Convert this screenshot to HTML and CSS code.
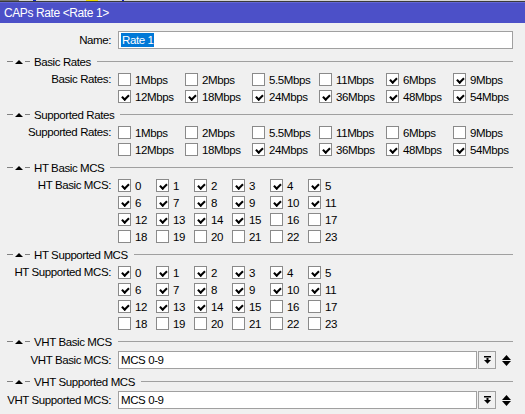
FILE: index.html
```html
<!DOCTYPE html>
<html lang="en">
<head>
    <meta charset="UTF-8">
    <meta name="viewport" content="width=device-width, initial-scale=1.0">
    <title>CAPs Rate &lt;Rate 1&gt;</title>
    <link rel="stylesheet" href="styles.css">
</head>
<body>

<div class="taskbar">
    <span class="tb-dark"></span><span class="tb-gap"></span><span class="tb-blue"></span><span class="tb-gap wide"></span><span class="tb-yellow"></span><span class="tb-gap"></span><span class="tb-blue small"></span>
</div>

<div class="window">
    <div class="titlebar">CAPs Rate &lt;Rate 1&gt;</div>

    <div class="form">
        <div class="field input-row">
            <div class="label">Name:</div>
            <div class="textbox name"><span class="selected">Rate 1</span></div>
        </div>

        <div class="section">
            <span class="dash"></span><span class="tri"></span><span class="dash short"></span>
            <span class="section-title">Basic Rates</span><span class="rule"></span>
        </div>
        <div class="field">
            <div class="label">Basic Rates:</div>
            <div class="checks rates">
                <label class="opt"><span class="cb"></span>1Mbps</label>
                <label class="opt"><span class="cb"></span>2Mbps</label>
                <label class="opt"><span class="cb"></span>5.5Mbps</label>
                <label class="opt"><span class="cb"></span>11Mbps</label>
                <label class="opt"><span class="cb on"></span>6Mbps</label>
                <label class="opt"><span class="cb on"></span>9Mbps</label>
                <label class="opt"><span class="cb on"></span>12Mbps</label>
                <label class="opt"><span class="cb on"></span>18Mbps</label>
                <label class="opt"><span class="cb on"></span>24Mbps</label>
                <label class="opt"><span class="cb on"></span>36Mbps</label>
                <label class="opt"><span class="cb on"></span>48Mbps</label>
                <label class="opt"><span class="cb on"></span>54Mbps</label>
            </div>
        </div>

        <div class="section">
            <span class="dash"></span><span class="tri"></span><span class="dash short"></span>
            <span class="section-title">Supported Rates</span><span class="rule"></span>
        </div>
        <div class="field">
            <div class="label">Supported Rates:</div>
            <div class="checks rates">
                <label class="opt"><span class="cb"></span>1Mbps</label>
                <label class="opt"><span class="cb"></span>2Mbps</label>
                <label class="opt"><span class="cb"></span>5.5Mbps</label>
                <label class="opt"><span class="cb"></span>11Mbps</label>
                <label class="opt"><span class="cb"></span>6Mbps</label>
                <label class="opt"><span class="cb"></span>9Mbps</label>
                <label class="opt"><span class="cb"></span>12Mbps</label>
                <label class="opt"><span class="cb"></span>18Mbps</label>
                <label class="opt"><span class="cb on"></span>24Mbps</label>
                <label class="opt"><span class="cb on"></span>36Mbps</label>
                <label class="opt"><span class="cb on"></span>48Mbps</label>
                <label class="opt"><span class="cb on"></span>54Mbps</label>
            </div>
        </div>

        <div class="section">
            <span class="dash"></span><span class="tri"></span><span class="dash short"></span>
            <span class="section-title">HT Basic MCS</span><span class="rule"></span>
        </div>
        <div class="field">
            <div class="label">HT Basic MCS:</div>
            <div class="checks mcs">
                <label class="opt"><span class="cb on"></span>0</label>
                <label class="opt"><span class="cb on"></span>1</label>
                <label class="opt"><span class="cb on"></span>2</label>
                <label class="opt"><span class="cb on"></span>3</label>
                <label class="opt"><span class="cb on"></span>4</label>
                <label class="opt"><span class="cb on"></span>5</label>
                <label class="opt"><span class="cb on"></span>6</label>
                <label class="opt"><span class="cb on"></span>7</label>
                <label class="opt"><span class="cb on"></span>8</label>
                <label class="opt"><span class="cb on"></span>9</label>
                <label class="opt"><span class="cb on"></span>10</label>
                <label class="opt"><span class="cb on"></span>11</label>
                <label class="opt"><span class="cb on"></span>12</label>
                <label class="opt"><span class="cb on"></span>13</label>
                <label class="opt"><span class="cb on"></span>14</label>
                <label class="opt"><span class="cb on"></span>15</label>
                <label class="opt"><span class="cb"></span>16</label>
                <label class="opt"><span class="cb"></span>17</label>
                <label class="opt"><span class="cb"></span>18</label>
                <label class="opt"><span class="cb"></span>19</label>
                <label class="opt"><span class="cb"></span>20</label>
                <label class="opt"><span class="cb"></span>21</label>
                <label class="opt"><span class="cb"></span>22</label>
                <label class="opt"><span class="cb"></span>23</label>
            </div>
        </div>

        <div class="section">
            <span class="dash"></span><span class="tri"></span><span class="dash short"></span>
            <span class="section-title">HT Supported MCS</span><span class="rule"></span>
        </div>
        <div class="field">
            <div class="label">HT Supported MCS:</div>
            <div class="checks mcs">
                <label class="opt"><span class="cb on"></span>0</label>
                <label class="opt"><span class="cb on"></span>1</label>
                <label class="opt"><span class="cb on"></span>2</label>
                <label class="opt"><span class="cb on"></span>3</label>
                <label class="opt"><span class="cb on"></span>4</label>
                <label class="opt"><span class="cb on"></span>5</label>
                <label class="opt"><span class="cb on"></span>6</label>
                <label class="opt"><span class="cb on"></span>7</label>
                <label class="opt"><span class="cb on"></span>8</label>
                <label class="opt"><span class="cb on"></span>9</label>
                <label class="opt"><span class="cb on"></span>10</label>
                <label class="opt"><span class="cb on"></span>11</label>
                <label class="opt"><span class="cb on"></span>12</label>
                <label class="opt"><span class="cb on"></span>13</label>
                <label class="opt"><span class="cb on"></span>14</label>
                <label class="opt"><span class="cb on"></span>15</label>
                <label class="opt"><span class="cb"></span>16</label>
                <label class="opt"><span class="cb"></span>17</label>
                <label class="opt"><span class="cb"></span>18</label>
                <label class="opt"><span class="cb"></span>19</label>
                <label class="opt"><span class="cb"></span>20</label>
                <label class="opt"><span class="cb"></span>21</label>
                <label class="opt"><span class="cb"></span>22</label>
                <label class="opt"><span class="cb"></span>23</label>
            </div>
        </div>

        <div class="section">
            <span class="dash"></span><span class="tri"></span><span class="dash short"></span>
            <span class="section-title">VHT Basic MCS</span><span class="rule"></span>
        </div>
        <div class="field input-row">
            <div class="label">VHT Basic MCS:</div>
            <div class="textbox select">MCS 0-9</div>
            <div class="drop-btn">
                <svg width="7" height="8" viewBox="0 0 7 8"><rect x="0" y="0" width="7" height="1.5" fill="#000"/><rect x="2.5" y="2" width="2" height="2" fill="#000"/><path d="M0 4 H7 L3.5 7.8 Z" fill="#000"/></svg>
            </div>
            <div class="updown">
                <svg width="9" height="11" viewBox="0 0 9 11"><path d="M0 5 L4.5 0 L9 5 Z" fill="#000"/><path d="M0 6 L9 6 L4.5 11 Z" fill="#000"/></svg>
            </div>
        </div>

        <div class="section">
            <span class="dash"></span><span class="tri"></span><span class="dash short"></span>
            <span class="section-title">VHT Supported MCS</span><span class="rule"></span>
        </div>
        <div class="field input-row">
            <div class="label">VHT Supported MCS:</div>
            <div class="textbox select">MCS 0-9</div>
            <div class="drop-btn">
                <svg width="7" height="8" viewBox="0 0 7 8"><rect x="0" y="0" width="7" height="1.5" fill="#000"/><rect x="2.5" y="2" width="2" height="2" fill="#000"/><path d="M0 4 H7 L3.5 7.8 Z" fill="#000"/></svg>
            </div>
            <div class="updown">
                <svg width="9" height="11" viewBox="0 0 9 11"><path d="M0 5 L4.5 0 L9 5 Z" fill="#000"/><path d="M0 6 L9 6 L4.5 11 Z" fill="#000"/></svg>
            </div>
        </div>
    </div>
</div>

</body>
</html>
```

FILE: styles.css
```css
body {
    margin: 0;
    padding: 0;
    background-color: #f0f0f0;
    font-family: "Liberation Sans", Arial, sans-serif;
    font-size: 11.5px;
    letter-spacing: -0.4px;
    color: #000;
    overflow: hidden;
}
.taskbar {
    display: flex;
    height: 1px;
    background-color: #d4d4d4;
    border-bottom: 1px solid #3a3a3a;
}
.tb-dark {
    width: 19px;
    background-color: #6a6a6a;
}
.tb-gap {
    width: 14px;
}
.tb-gap.wide {
    width: 50px;
}
.tb-blue {
    width: 3px;
    background-color: #1020c0;
}
.tb-blue.small {
    width: 2px;
    margin-left: 10px;
}
.tb-yellow {
    width: 12px;
    background-color: #f0e000;
}
.titlebar {
    height: 20px;
    line-height: 21px;
    padding-left: 4px;
    background-color: #4c50c8;
    border-top: 1px solid #6468d4;
    color: #fff;
    font-size: 12px;
    letter-spacing: -0.4px;
}
.form {
    padding-top: 8px;
}
.field {
    display: flex;
    align-items: flex-start;
}
.label {
    width: 111px;
    margin-right: 7px;
    text-align: right;
    line-height: 17px;
    white-space: nowrap;
}
.input-row {
    height: 21px;
}
.input-row .label {
    line-height: 18px;
}
.textbox {
    box-sizing: border-box;
    height: 18px;
    line-height: 16px;
    padding-left: 2px;
    background-color: #fff;
    border: 1px solid #a0a0a0;
}
.textbox.name {
    width: 395px;
}
.selected {
    display: inline-block;
    line-height: 14px;
    margin-top: 1px;
    padding: 0 1px;
    background-color: #0078d7;
    color: #fff;
}
.textbox.select {
    width: 359px;
}
.drop-btn {
    box-sizing: border-box;
    width: 18px;
    height: 18px;
    margin-left: 1px;
    border: 1px solid #a0a0a0;
    background-color: #f0f0f0;
    display: flex;
    align-items: center;
    justify-content: center;
}
.updown {
    height: 18px;
    margin-left: 6px;
    display: flex;
    align-items: center;
}
.section {
    display: flex;
    align-items: center;
    height: 19px;
    padding-left: 7px;
    padding-right: 12px;
}
.dash {
    width: 6px;
    height: 1px;
    margin-right: 2px;
    background-color: #808080;
}
.dash.short {
    width: 5px;
    margin-right: 4px;
}
.tri {
    width: 0;
    height: 0;
    margin-right: 2px;
    border-left: 4px solid transparent;
    border-right: 4px solid transparent;
    border-bottom: 4px solid #000;
}
.section-title {
    white-space: nowrap;
}
.rule {
    flex: 1;
    height: 1px;
    margin-left: 6px;
    background-color: #a0a0a0;
}
.checks {
    display: grid;
    grid-auto-rows: 17px;
}
.checks.rates {
    grid-template-columns: repeat(6, 67px);
}
.checks.mcs {
    grid-template-columns: repeat(6, 38px);
}
.opt {
    display: flex;
    align-items: center;
    white-space: nowrap;
}
.cb {
    position: relative;
    box-sizing: border-box;
    width: 13px;
    height: 13px;
    margin-right: 4px;
    background-color: #fff;
    border: 1px solid #8a8a8a;
    flex-shrink: 0;
}
.cb.on::after {
    content: "";
    position: absolute;
    left: 4px;
    top: 1.5px;
    width: 2.5px;
    height: 5px;
    border: solid #000;
    border-width: 0 2px 2px 0;
    transform: rotate(45deg);
}
```
